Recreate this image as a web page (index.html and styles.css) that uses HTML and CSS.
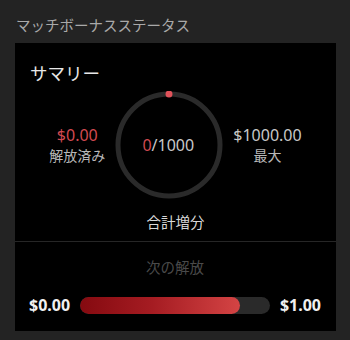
FILE: index.html
```html
<!DOCTYPE html>
<html lang="ja">
<head>
<meta charset="utf-8">
<link rel="stylesheet" href="styles.css">
</head>
<body>
<div class="page">
  <div class="title">マッチボーナスステータス</div>
  <div class="panel">
    <div class="summary">
      <div class="heading">サマリー</div>
      <div class="stats">
        <div class="stat">
          <div class="value red">$0.00</div>
          <div class="label">解放済み</div>
        </div>
        <div class="ring">
          <svg width="108" height="108" viewBox="0 0 108 108">
            <circle cx="54" cy="54" r="51" fill="none" stroke="#2a2a2a" stroke-width="5"/>
            <circle cx="54" cy="3" r="3.5" fill="#e0525a"/>
          </svg>
          <div class="ring-text"><span class="red">0</span>/1000</div>
        </div>
        <div class="stat">
          <div class="value">$1000.00</div>
          <div class="label">最大</div>
        </div>
      </div>
      <div class="total">合計増分</div>
    </div>
    <div class="next">
      <div class="next-label">次の解放</div>
      <div class="bar-row">
        <span class="amount">$0.00</span>
        <div class="track"><div class="fill" style="width:84%"></div></div>
        <span class="amount">$1.00</span>
      </div>
    </div>
  </div>
</div>
</body>
</html>
```

FILE: styles.css
```css
html, body {
  margin: 0;
  padding: 0;
  background: #232323;
}
body {
  font-family: "Noto Sans", "Noto Sans CJK JP", sans-serif;
  width: 350px;
  height: 340px;
  overflow: hidden;
}
.page {
  padding: 15px 14px 0 15px;
}
.title {
  font-size: 14.5px;
  line-height: 20px;
  color: #a9a9a9;
  padding-left: 1px;
}
.panel {
  margin-top: 8px;
  background: #000;
  width: 321px;
}
.summary {
  padding: 18px 0 9px;
  border-bottom: 1px solid #262626;
}
.heading {
  font-size: 17.5px;
  line-height: 24px;
  color: #e8e8e8;
  padding-left: 15px;
}
.stats {
  margin-top: 6px;
  display: flex;
  justify-content: center;
  align-items: center;
  gap: 10px;
}
.stat {
  display: flex;
  flex-direction: column;
  align-items: center;
}
.value {
  font-size: 16px;
  line-height: 21px;
  color: #c8c8c8;
}
.label {
  font-size: 14px;
  line-height: 20px;
  color: #b8b8b8;
}
.red {
  color: #d24a51;
}
.ring {
  width: 108px;
  height: 108px;
  display: grid;
  place-items: center;
}
.ring svg {
  grid-area: 1 / 1;
}
.ring-text {
  grid-area: 1 / 1;
  font-size: 16px;
  color: #c8c8c8;
  margin-left: -2px;
}
.total {
  margin-top: 13px;
  text-align: center;
  font-size: 14.5px;
  line-height: 20px;
  color: #d8d8d8;
}
.next {
  padding: 15px 15px 15px 14px;
}
.next-label {
  text-align: center;
  font-size: 14.5px;
  line-height: 20px;
  color: #4a4a4a;
}
.bar-row {
  margin-top: 17px;
  display: flex;
  align-items: center;
  gap: 10px;
  height: 22px;
}
.amount {
  font-size: 16px;
  font-weight: 700;
  color: #f0f0f0;
}
.track {
  flex: 1;
  height: 17px;
  border-radius: 9px;
  background: #2a2a2a;
  overflow: hidden;
}
.fill {
  height: 100%;
  border-radius: 9px;
  background: linear-gradient(90deg, #850a10 0%, #a51c22 45%, #d44444 100%);
}
```
